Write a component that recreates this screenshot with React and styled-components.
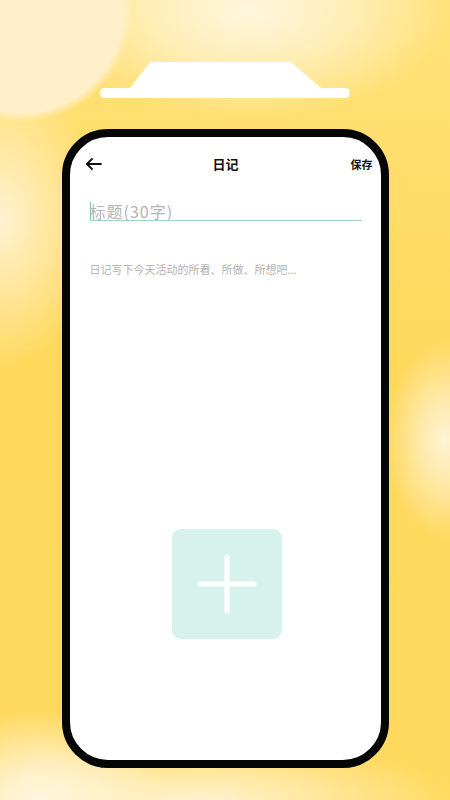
import React from 'react';
import styled, { createGlobalStyle } from 'styled-components';

const GlobalStyle = createGlobalStyle`
    html, body {
        margin: 0;
        padding: 0;
    }
    body {
        font-family: "Noto Sans CJK SC", "Noto Sans", sans-serif;
    }
`

const Page = styled.div`
    width: 450px;
    height: 800px;
    overflow: hidden;
    display: flex;
    flex-direction: column;
    align-items: center;
    padding-top: 62px;
    box-sizing: border-box;
    background:
        radial-gradient(circle at 22px 12px, #fff0cb 0, #fff0cb 100px, rgba(255, 240, 203, 0) 110px),
        radial-gradient(ellipse 200px 110px at 250px 10px, #fff6df 0%, rgba(255, 246, 223, 0.6) 50%, rgba(255, 246, 223, 0) 100%),
        radial-gradient(ellipse 60px 100px at 445px 440px, #fff3d6 0%, rgba(255, 243, 214, 0.6) 45%, rgba(255, 243, 214, 0) 100%),
        radial-gradient(ellipse 100px 150px at 0px 220px, #fff2d2 0%, rgba(255, 242, 210, 0.5) 50%, rgba(255, 242, 210, 0) 100%),
        radial-gradient(ellipse 130px 90px at 40px 800px, #fff6e0 0%, rgba(255, 246, 224, 0.6) 50%, rgba(255, 246, 224, 0) 100%),
        radial-gradient(ellipse 260px 60px at 200px 800px, #fff3d2 0%, rgba(255, 243, 210, 0) 100%),
        linear-gradient(180deg, #ffe27a 0%, #ffd85c 45%, #ffd95e 100%);
`

const Notch = styled.svg`
    display: block;
    flex-shrink: 0;
`

const Phone = styled.div`
    margin-top: 30px;
    width: 327px;
    height: 639px;
    box-sizing: border-box;
    border: 8px solid #050505;
    border-radius: 46px;
    background: #ffffff;
    display: flex;
    flex-direction: column;
    padding: 0 19px 0 20px;
`

const Header = styled.div`
    margin-top: 18px;
    height: 18px;
    display: flex;
    align-items: center;
    justify-content: space-between;
    margin-left: -5px;
    margin-right: -11px;
`

const BackButton = styled.button`
    border: none;
    background: none;
    padding: 0;
    width: 20px;
    height: 18px;
    display: flex;
    align-items: center;
    cursor: pointer;
`

const Title = styled.h1`
    margin: 0 0 0 -4px;
    font-size: 13px;
    font-weight: 700;
    color: #111;
    line-height: 18px;
`

const SaveButton = styled.button`
    border: none;
    background: none;
    padding: 0;
    font-family: inherit;
    font-size: 11px;
    font-weight: 700;
    color: #111;
    line-height: 18px;
    cursor: pointer;
`

const TitleField = styled.div`
    margin-top: 28px;
    height: 19px;
    border-bottom: 1.5px solid #9fd4c8;
    position: relative;
    display: flex;
    align-items: center;
`

const Caret = styled.span`
    position: absolute;
    left: 0;
    top: 1px;
    width: 1.5px;
    height: 18px;
    background: #7fc6b6;
`

const TitlePlaceholder = styled.span`
    font-size: 16px;
    line-height: 18px;
    color: #b4b4b4;
    letter-spacing: 1px;
`

const BodyPlaceholder = styled.p`
    margin: 40px 0 0;
    font-size: 11px;
    line-height: 16px;
    color: #b3b3b3;
`

const AddBox = styled.button`
    align-self: center;
    margin-top: 252px;
    margin-left: 2px;
    width: 110px;
    height: 110px;
    border: none;
    border-radius: 9px;
    background: #d6f2eb;
    display: flex;
    align-items: center;
    justify-content: center;
    padding: 0;
    cursor: pointer;
`

function App() {
    return (
        <Page>
            <GlobalStyle />
            <Notch width="252" height="37" viewBox="0 0 252 37">
                <path d="M51 0 L192 0 L222 26 L246 26 Q251 26 251 31 Q251 36 246 36 L6 36 Q1 36 1 31 Q1 26 6 26 L31 26 Z" fill="#ffffff" />
            </Notch>
            <Phone>
                <Header>
                    <BackButton>
                        <svg width="17" height="12" viewBox="0 0 17 12">
                            <path d="M16 6 H2 M7 1 L1.8 6 L7 11" fill="none" stroke="#111" strokeWidth="1.8" strokeLinecap="round" strokeLinejoin="round" />
                        </svg>
                    </BackButton>
                    <Title>日记</Title>
                    <SaveButton>保存</SaveButton>
                </Header>
                <TitleField>
                    <Caret />
                    <TitlePlaceholder>标题(30字)</TitlePlaceholder>
                </TitleField>
                <BodyPlaceholder>日记写下今天活动的所看、所做、所想吧...</BodyPlaceholder>
                <AddBox>
                    <svg width="60" height="60" viewBox="0 0 60 60">
                        <path d="M30 3 V57 M3 30 H57" stroke="#ffffff" strokeWidth="5" strokeLinecap="round" />
                    </svg>
                </AddBox>
            </Phone>
        </Page>
    );
}

export default App;
